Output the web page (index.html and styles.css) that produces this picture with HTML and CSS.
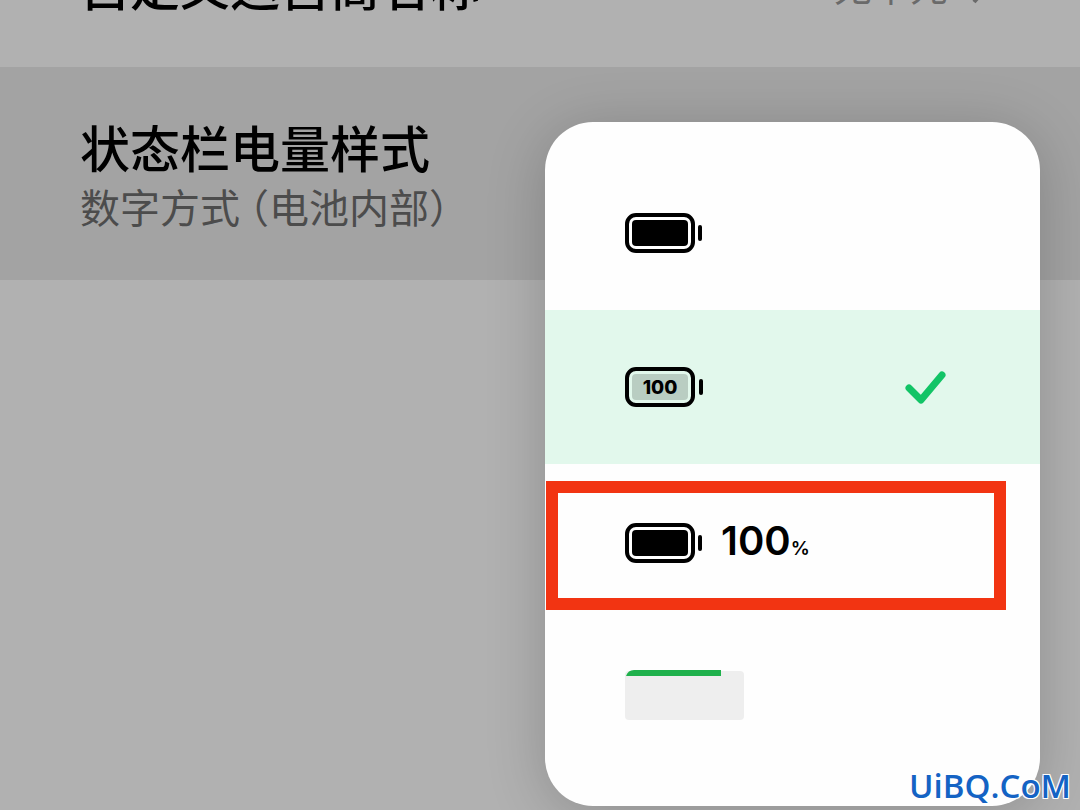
FILE: index.html
```html
<!doctype html>
<html lang="zh-CN">
    <head>
        <meta charset="utf-8" />
        <title>状态栏电量样式</title>
        <link rel="stylesheet" href="styles.css">
    </head>
    <body>
        <main class="settings">
            <a class="setting" href="#carrier">
                <span class="setting-title">自定义运营商名称</span>
                <span class="setting-value">
                    无单元
                    <svg class="chevron" width="20" height="40" viewBox="0 0 20 40">
                        <path d="M2 2l16 18L2 38" />
                    </svg>
                </span>
            </a>
            <a class="setting active" href="#battery">
                <span class="setting-text">
                    <span class="setting-title">状态栏电量样式</span>
                    <span class="setting-desc">数字方式 （电池内部）</span>
                </span>
            </a>
        </main>

        <div class="popup" role="menu">
            <button class="option" role="menuitemradio" aria-checked="false" aria-label="图形">
                <svg class="battery" width="78" height="40" viewBox="0 0 78 40">
                    <rect class="shell" x="2" y="2" width="66" height="36" rx="9" />
                    <rect class="fill" x="7" y="7" width="56" height="26" rx="4" />
                    <rect class="fill" x="73" y="12" width="4" height="16" rx="2" />
                </svg>
            </button>
            <button class="option selected" role="menuitemradio" aria-checked="true">
                <svg class="battery" width="78" height="40" viewBox="0 0 78 40">
                    <rect class="shell" x="2" y="2" width="66" height="36" rx="9" />
                    <rect class="fill pale" x="7" y="7" width="56" height="26" rx="4" />
                    <rect class="fill" x="74" y="12" width="4" height="16" rx="2" />
                    <text x="35" y="27" text-anchor="middle">100</text>
                </svg>
                <svg class="check" width="42" height="34" viewBox="0 0 42 34">
                    <path d="M5 18l12 12L38 5" />
                </svg>
            </button>
            <button class="option with-percent" role="menuitemradio" aria-checked="false">
                <svg class="battery" width="78" height="40" viewBox="0 0 78 40">
                    <rect class="shell" x="2" y="2" width="66" height="36" rx="9" />
                    <rect class="fill" x="7" y="7" width="56" height="26" rx="4" />
                    <rect class="fill" x="73" y="12" width="4" height="16" rx="2" />
                </svg>
                <span class="percent">100<small>%</small></span>
            </button>
            <button class="option" role="menuitemradio" aria-checked="false" aria-label="顶部">
                <svg class="top-bar" width="120" height="52" viewBox="0 0 120 52">
                    <rect class="screen" x="0" y="2" width="119" height="49" rx="4" />
                    <path class="level" d="M1 7Q3 1 9 1H96V7Z" />
                </svg>
            </button>
        </div>

        <div class="marker"></div>
        <div class="watermark">UiBQ.CoM</div>
    </body>
</html>
```

FILE: styles.css
```css
* {
    box-sizing: border-box;
}

body {
    margin: 0;
    height: 100vh;
    position: relative;
    overflow: hidden;
    background-color: #b1b1b1;
    font-family: "Noto Sans CJK SC", sans-serif;
}

/* the list is scrolled, its first row is partly off the top */
.settings {
    margin-top: -95px;
}

.setting {
    display: flex;
    align-items: center;
    justify-content: space-between;
    height: 162px;
    padding: 0 88px 4px 80px;
    color: #000;
    text-decoration: none;
}

.setting.active {
    height: 213px;
    padding-bottom: 0;
    background-color: #a3a3a3;
}

.setting-text {
    display: flex;
    flex-direction: column;
}

.setting-title {
    font-size: 50px;
    font-weight: 500;
    line-height: 64px;
}

.setting-desc {
    font-size: 40px;
    line-height: 56px;
    color: #4c4c4c;
    font-feature-settings: "halt";
}

.setting-value {
    display: flex;
    align-items: center;
    gap: 24px;
    font-size: 38px;
    color: #6a6a6a;
}

.chevron {
    fill: none;
    stroke: #6a6a6a;
    stroke-width: 4;
}

.popup {
    position: absolute;
    top: 122px;
    right: 40px;
    width: 495px;
    padding: 34px 0;
    background-color: #fefefe;
    border-radius: 48px;
    box-shadow: 0 8px 60px rgba(0, 0, 0, 0.2);
}

.option {
    display: flex;
    align-items: center;
    gap: 18px;
    width: 100%;
    height: 154px;
    padding: 0 94px 0 80px;
    border: none;
    background: none;
    color: #000;
    cursor: pointer;
}

.option.selected {
    background-color: #e2f8ec;
}

.option.with-percent {
    padding-top: 4px;
}

.shell {
    fill: #fff;
    stroke: #000;
    stroke-width: 4;
}

.selected .shell {
    fill: #e2f8ec;
}

.fill.pale {
    fill: #b9cdc2;
}

.battery text {
    font-family: Inter, sans-serif;
    font-size: 19px;
    font-weight: 800;
}

.check {
    margin-left: auto;
    fill: none;
    stroke: #12c466;
    stroke-width: 7;
    stroke-linecap: round;
    stroke-linejoin: round;
}

.percent {
    padding-top: 4px;
    font-family: Inter, sans-serif;
    font-size: 40px;
    font-weight: 600;
    line-height: 40px;
}

.percent small {
    font-size: 19px;
}

.screen {
    fill: #eee;
}

.level {
    fill: #1fb14c;
}

.marker {
    position: absolute;
    top: 481px;
    right: 74px;
    width: 460px;
    height: 129px;
    border: 12px solid #f23412;
    pointer-events: none;
}

.watermark {
    position: absolute;
    right: 9px;
    bottom: 4px;
    font-family: "Open Sans", sans-serif;
    font-size: 33px;
    font-weight: 600;
    line-height: 40px;
    color: #1463c4;
    text-shadow: 1px 1px 0 #fff, -1px -1px 0 #fff, 1px -1px 0 #fff, -1px 1px 0 #fff;
}
```
